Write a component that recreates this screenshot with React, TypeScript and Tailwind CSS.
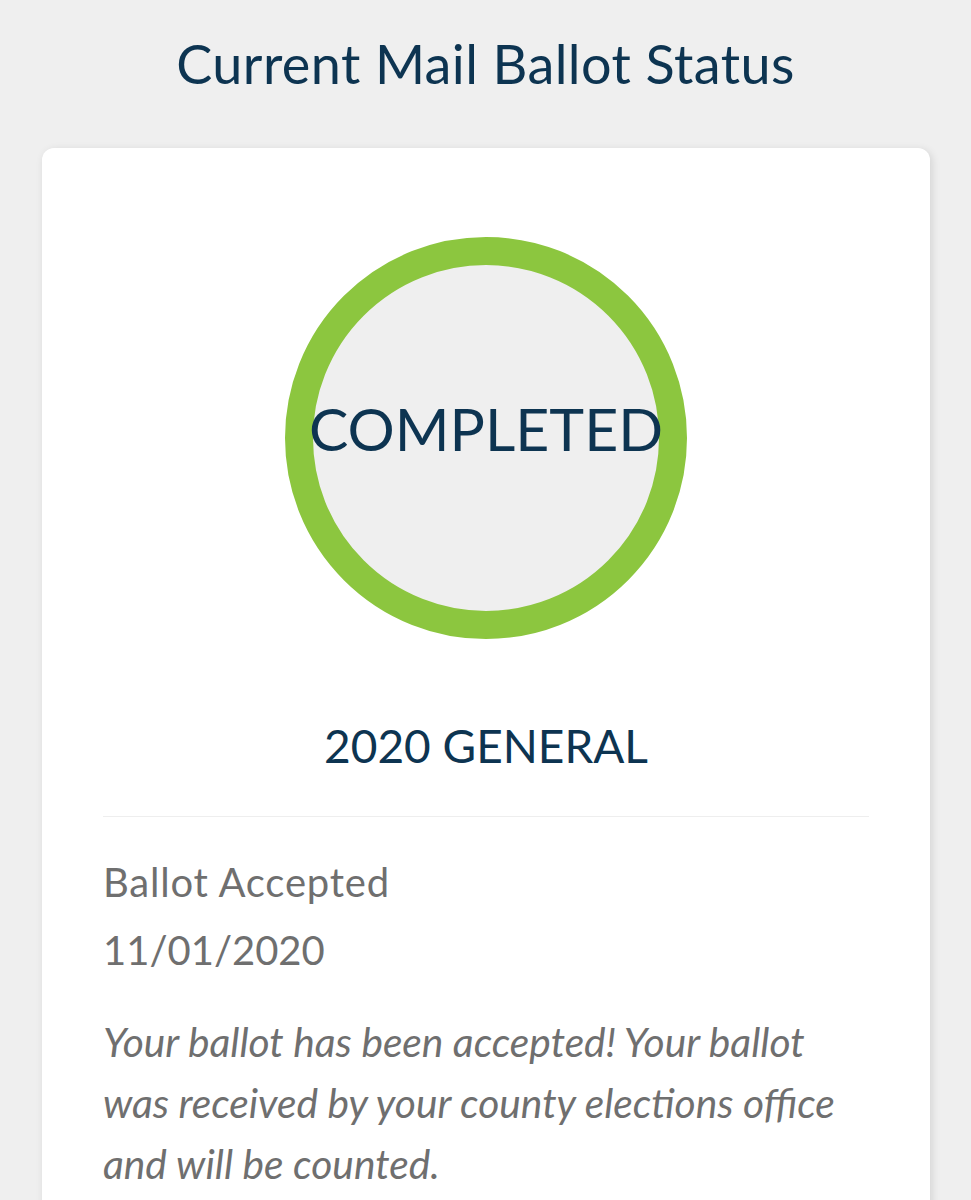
export default function App() {
  return (
    <div className="min-h-[1200px] bg-[#efefef] font-['Lato','Noto_Sans',sans-serif] overflow-hidden">
      {/* Page heading */}
      <h1 className="pt-[32px] text-center text-[54px] leading-[1.2] tracking-[0.4px] font-normal text-[#0d3451]">
        Current Mail Ballot Status
      </h1>

      {/* Status card */}
      <div className="mx-[41px] ml-[42px] mt-[51px] rounded-[12px] bg-white shadow-[2px_2px_8px_rgba(0,0,0,0.12)] px-[61px] pt-[89px] pb-12">
        <div className="flex justify-center">
          <div className="w-[402px] h-[402px] rounded-full border-[28px] border-[#8cc63f] bg-[#efefef] flex items-center justify-center pb-4">
            <span className="text-[59px] leading-[1.2] text-[#0d3451] whitespace-nowrap">COMPLETED</span>
          </div>
        </div>

        <h2 className="mt-[79px] text-center text-[46px] leading-[1.2] text-[#0d3451]">2020 GENERAL</h2>

        <div className="mt-[43px] h-px bg-[#eeeeee]" />

        <div className="mt-[31px] text-[40px] leading-[68px] text-[#6f6f6f]">
          <p className="tracking-[0.8px]">Ballot Accepted</p>
          <p>11/01/2020</p>
        </div>

        <p className="mt-[27px] text-[40.7px] leading-[61px] italic text-[#6f6f6f]">
          Your ballot has been accepted! Your ballot
          <br />
          was received by your county elections office and will be counted.
        </p>
      </div>
    </div>
  );
}
